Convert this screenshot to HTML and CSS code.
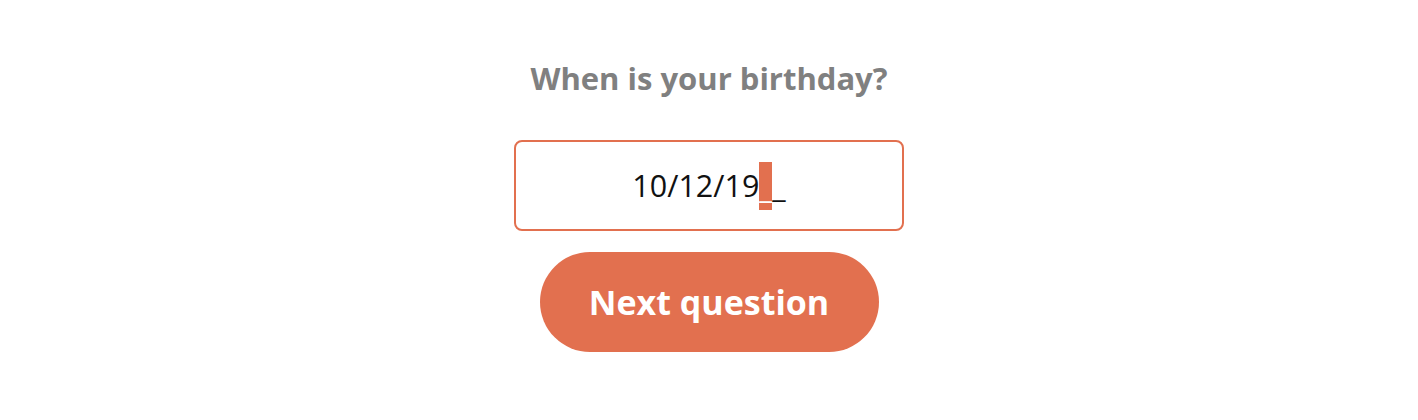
FILE: index.html
```html
<!DOCTYPE html>
<html lang="en">
<head>
    <meta charset="UTF-8">
    <meta name="viewport" content="width=device-width, initial-scale=1.0">
    <title>Birthday question</title>
    <link rel="stylesheet" href="styles.css">
</head>
<body>
    <div class="container">
        <h2 class="question">When is your birthday?</h2>
        <div class="date-input">
            <span class="value">10/12/19<span class="cursor">_</span>_</span>
        </div>
        <button class="next-btn">Next question</button>
    </div>
</body>
</html>
```

FILE: styles.css
```css
/* General Styles */
body {
    font-family: "Open Sans", Lato, sans-serif;
    margin: 0;
    padding: 0;
    background: #fff;
}

.container {
    display: flex;
    flex-direction: column;
    align-items: center;
    padding-top: 56px;
}

.question {
    margin: 0;
    font-size: 31px;
    line-height: 44px;
    font-weight: bold;
    color: #808080;
}

.date-input {
    margin-top: 40px;
    width: 386px;
    height: 87px;
    border: 2px solid #e2704f;
    border-radius: 8px;
    display: flex;
    align-items: center;
    justify-content: center;
}

.value {
    font-size: 30.5px;
    color: #111;
}

.cursor {
    display: inline-block;
    background: #e2704f;
    color: #fff;
    width: 13px;
    height: 48px;
    line-height: 48px;
    vertical-align: -13px;
    overflow: hidden;
}

.next-btn {
    margin-top: 21px;
    width: 339px;
    height: 100px;
    border: none;
    border-radius: 50px;
    background: #e2704f;
    color: white;
    font-family: "Open Sans", Lato, sans-serif;
    font-size: 34px;
    font-weight: bold;
}
```
